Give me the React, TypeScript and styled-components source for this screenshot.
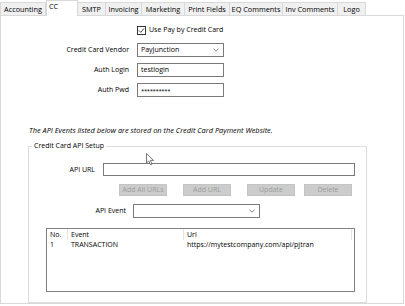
import React from "react";
import styled, { createGlobalStyle } from "styled-components";

const Global = createGlobalStyle`
  html, body { margin: 0; padding: 0; background: #ffffff; }
  * { box-sizing: border-box; }
`;

const Root = styled.div`
  position: relative;
  width: 405px;
  height: 306px;
  background: #ffffff;
  font-family: "Open Sans", "Noto Sans", sans-serif;
  font-size: 7px;
  color: #000;
  display: flex;
  flex-direction: column;
  overflow: hidden;
`;

const TabStrip = styled.div`
  display: flex;
  align-items: flex-end;
  height: 15px;
`;

const Tab = styled.div<{ $w: number; $active?: boolean }>`
  position: relative;
  z-index: ${(p) => (p.$active ? 2 : 0)};
  width: ${(p) => p.$w}px;
  height: ${(p) => (p.$active ? 16 : 13)}px;
  margin-bottom: ${(p) => (p.$active ? -1 : 0)}px;
  background: ${(p) => (p.$active ? "#ffffff" : "#f0f0f0")};
  border: 1px solid #d9d9d9;
  border-bottom: none;
  border-left: ${(p) => (p.$active ? "1px solid #d9d9d9" : "none")};
  display: flex;
  align-items: ${(p) => (p.$active ? "flex-start" : "center")};
  justify-content: ${(p) => (p.$active ? "flex-start" : "center")};
  padding: ${(p) => (p.$active ? "0 0 0 2px" : "0")};
  font-size: 7.3px;
  line-height: 11px;
  white-space: nowrap;
  &:first-child { border-left: 1px solid #d9d9d9; }
`;

const Panel = styled.div`
  width: 404px;
  height: 289px;
  border: 1px solid #d9d9d9;
  display: flex;
  flex-direction: column;
`;

const FormGrid = styled.div`
  margin-top: 9px;
  display: grid;
  grid-template-columns: 128px 87px;
  column-gap: 8px;
  row-gap: 6px;
  align-items: center;
`;

const Label = styled.div`
  text-align: right;
  white-space: nowrap;
  line-height: 10px;
`;

const CheckRow = styled.label`
  grid-column: 2;
  display: flex;
  align-items: center;
  gap: 3px;
  height: 10px;
  margin-bottom: 2px;
  white-space: nowrap;
  line-height: 10px;
`;

const CheckBox = styled.span`
  width: 9px;
  height: 9px;
  border: 1px solid #333;
  background: #fff;
  display: flex;
  align-items: center;
  justify-content: center;
`;

const Field = styled.div<{ $h?: number; $w?: number }>`
  height: ${(p) => p.$h ?? 14}px;
  ${(p) => (p.$w ? `width: ${p.$w}px;` : "")}
  border: 1px solid #7a7a7a;
  background: #fff;
  display: flex;
  align-items: center;
  padding: 0 3px;
  line-height: 10px;
  white-space: nowrap;
`;

const SelectField = styled(Field)`
  justify-content: space-between;
  padding-right: 4px;
`;

const Secret = styled.span`
  font-size: 6px;
  letter-spacing: -0.4px;
  position: relative;
  top: 1px;
`;

const Note = styled.div`
  margin: 28px 0 0 28px;
  font-style: italic;
  font-size: 7.4px;
  line-height: 10px;
  white-space: nowrap;
`;

const GroupBox = styled.div`
  position: relative;
  margin: 11px 0 0 27px;
  width: 339px;
  height: 157px;
  border: 1px solid #dcdcdc;
  display: flex;
  flex-direction: column;
`;

const GroupTitle = styled.span`
  position: absolute;
  top: -6px;
  left: 3px;
  padding: 0 2px;
  background: #fff;
  line-height: 10px;
  white-space: nowrap;
`;

const GroupRow = styled.div<{ $label: number; $gap: number; $top: number }>`
  display: grid;
  grid-template-columns: ${(p) => p.$label}px auto;
  column-gap: ${(p) => p.$gap}px;
  align-items: center;
  margin-top: ${(p) => p.$top}px;
  justify-content: start;
`;

const ButtonRow = styled.div`
  display: flex;
  margin: 8px 0 0 90px;
`;

const Button = styled.div<{ $gap?: number }>`
  width: 48px;
  height: 12px;
  margin-left: ${(p) => p.$gap ?? 0}px;
  background: #cccccc;
  border: 1px solid #c4c4c4;
  color: #9d9d9d;
  display: flex;
  align-items: center;
  justify-content: center;
  line-height: 10px;
  white-space: nowrap;
`;

const ListBox = styled.div`
  margin: 10px 0 0 17px;
  width: 309px;
  height: 64px;
  border: 1px solid #828282;
  background: #fff;
  display: flex;
  flex-direction: column;
`;

const ListRow = styled.div<{ $header?: boolean }>`
  display: grid;
  grid-template-columns: 21px 116px 168px;
  height: ${(p) => (p.$header ? 11 : 10)}px;
  line-height: 10px;
  white-space: nowrap;
`;

const Cell = styled.div<{ $sep?: boolean }>`
  padding-left: 3px;
  display: flex;
  align-items: center;
  border-right: ${(p) => (p.$sep ? "1px solid #e5e5e5" : "none")};
`;

const Cursor = styled.svg`
  position: absolute;
  left: 146px;
  top: 153px;
`;

const Chevron = () => (
  <svg width="6" height="4" viewBox="0 0 6 4">
    <path d="M0.5 0.8 L3 3.2 L5.5 0.8" fill="none" stroke="#666" strokeWidth="0.8" />
  </svg>
);

const tabs: [string, number][] = [
  ["Accounting", 46],
  ["CC", 32],
  ["SMTP", 28],
  ["Invoicing", 36],
  ["Marketing", 43],
  ["Print Fields", 45],
  ["EQ Comments", 53],
  ["Inv Comments", 55],
  ["Logo", 28],
];

export default function App() {
  return (
    <Root>
      <Global />
      <TabStrip>
        {tabs.map(([t, w]) => (
          <Tab key={t} $w={w} $active={t === "CC"}>
            {t}
          </Tab>
        ))}
      </TabStrip>
      <Panel>
        <FormGrid>
          <CheckRow>
            <CheckBox>
              <svg width="7" height="7" viewBox="0 0 7 7">
                <path d="M1 3.6 L2.8 5.4 L6 1.4" fill="none" stroke="#333" strokeWidth="0.9" />
              </svg>
            </CheckBox>
            Use Pay by Credit Card
          </CheckRow>
          <Label>Credit Card Vendor</Label>
          <SelectField>
            <span>PayJunction</span>
            <Chevron />
          </SelectField>
          <Label>Auth Login</Label>
          <Field>testlogin</Field>
          <Label>Auth Pwd</Label>
          <Field>
            <Secret>**********</Secret>
          </Field>
        </FormGrid>
        <Note>The API Events listed below are stored on the Credit Card Payment Website.</Note>
        <GroupBox>
          <GroupTitle>Credit Card API Setup</GroupTitle>
          <GroupRow $label={66} $gap={8} $top={16}>
            <Label>API URL</Label>
            <Field $h={13} $w={252} />
          </GroupRow>
          <ButtonRow>
            <Button>Add All URLs</Button>
            <Button $gap={16}>Add URL</Button>
            <Button $gap={16}>Update</Button>
            <Button $gap={9}>Delete</Button>
          </ButtonRow>
          <GroupRow $label={97} $gap={7} $top={8}>
            <Label>API Event</Label>
            <SelectField $w={127}>
              <span />
              <Chevron />
            </SelectField>
          </GroupRow>
          <ListBox>
            <ListRow $header>
              <Cell $sep>No.</Cell>
              <Cell $sep>Event</Cell>
              <Cell $sep>Url</Cell>
            </ListRow>
            <ListRow>
              <Cell>1</Cell>
              <Cell>TRANSACTION</Cell>
              <Cell>https://mytestcompany.com/api/pjtran</Cell>
            </ListRow>
          </ListBox>
        </GroupBox>
      </Panel>
      <Cursor width="9" height="13" viewBox="0 0 9 13">
        <path
          d="M0.5 0.5 L0.5 10 L2.8 7.9 L4.5 11.8 L6 11.1 L4.4 7.4 L7.6 7.4 Z"
          fill="#fff"
          stroke="#555"
          strokeWidth="0.8"
          strokeLinejoin="round"
        />
      </Cursor>
    </Root>
  );
}
